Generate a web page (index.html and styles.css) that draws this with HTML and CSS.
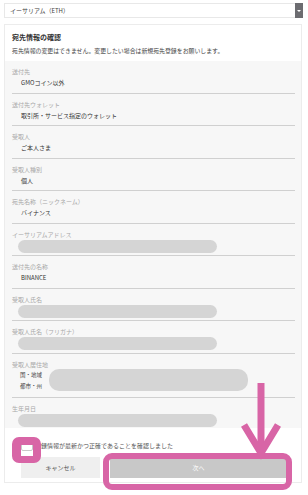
FILE: index.html
```html
<!DOCTYPE html>
<html lang="ja">
<head>
<meta charset="utf-8">
<link rel="stylesheet" href="styles.css">
</head>
<body>
<div class="select">
  <span class="select-text">イーサリアム（ETH）</span>
  <span class="select-btn"><span class="tri"></span></span>
</div>
<div class="card">
  <div class="card-head">
    <div class="title">宛先情報の確認</div>
    <div class="sub">宛先情報の変更はできません。変更したい場合は新規宛先登録をお願いします。</div>
  </div>
  <div class="list">
    <div class="row"><div class="label">送付先</div><div class="value">GMOコイン以外</div></div>
    <div class="row"><div class="label">送付先ウォレット</div><div class="value">取引所・サービス指定のウォレット</div></div>
    <div class="row"><div class="label">受取人</div><div class="value">ご本人さま</div></div>
    <div class="row"><div class="label">受取人種別</div><div class="value">個人</div></div>
    <div class="row"><div class="label">宛先名称（ニックネーム）</div><div class="value">バイナンス</div></div>
    <div class="row"><div class="label">イーサリアムアドレス</div><div class="pill-wrap"><div class="pill"></div></div></div>
    <div class="row"><div class="label">送付先の名称</div><div class="value">BINANCE</div></div>
    <div class="row"><div class="label">受取人氏名</div><div class="pill-wrap"><div class="pill"></div></div></div>
    <div class="row"><div class="label">受取人氏名（フリガナ）</div><div class="pill-wrap"><div class="pill"></div></div></div>
    <div class="row row-addr">
      <div class="label">受取人居住地</div>
      <div class="addr">
        <div class="addr-labels"><div>国・地域</div><div>都市・州</div></div>
        <div class="pill pill-big"></div>
      </div>
    </div>
    <div class="row row-last"><div class="label">生年月日</div><div class="pill-wrap"><div class="pill"></div></div></div>
  </div>
  <div class="foot">
    <div class="check-row">
      <span class="checkbox"></span>
      <span class="check-text">登録情報が最新かつ正確であることを確認しました</span>
    </div>
    <div class="btn-row">
      <div class="btn btn-cancel">キャンセル</div>
      <div class="btn btn-next">次へ</div>
    </div>
  </div>
</div>
<div class="mark mark-check"></div>
<div class="mark mark-next"></div>
<svg class="arrow" width="50" height="80" viewBox="0 0 50 80">
  <path d="M21 0 V70" stroke="#d865a6" stroke-width="7" fill="none"/>
  <path d="M4 42 L21 70 L38 42" stroke="#d865a6" stroke-width="7" fill="none" stroke-linejoin="miter"/>
</svg>
</body>
</html>
```

FILE: styles.css
```css
html, body {
  margin: 0;
  padding: 0;
  background: #ffffff;
  font-family: "Noto Sans CJK JP", "Noto Sans", sans-serif;
  color: #333;
}
body {
  position: relative;
  width: 308px;
  height: 495px;
  overflow: hidden;
}
.select {
  margin: 3px 5px 0 4px;
  height: 15px;
  border: 1px solid #e8e8e8;
  border-right: none;
  box-sizing: border-box;
  display: flex;
  align-items: center;
  justify-content: space-between;
  background: #fff;
}
.select-text {
  padding-left: 5px;
  font-size: 6px;
  line-height: 10px;
  color: #444;
}
.select-btn {
  width: 8px;
  height: 15px;
  margin-top: -1px;
  margin-bottom: -1px;
  background: #6c6c70;
  display: flex;
  align-items: center;
  justify-content: center;
}
.tri {
  width: 0;
  height: 0;
  border-left: 2px solid transparent;
  border-right: 2px solid transparent;
  border-top: 2px solid #fff;
}
.card {
  margin: 6px 6px 0 4px;
  border: 1px solid #ececec;
  background: #fff;
}
.card-head {
  padding: 7px 7px 5px 7px;
}
.title {
  font-size: 7px;
  line-height: 10px;
  font-weight: bold;
  color: #333;
}
.sub {
  margin-top: 4px;
  font-size: 5.9px;
  line-height: 10px;
  color: #444;
  white-space: nowrap;
}
.list {
  background: #f7f7f7;
  padding: 0 6px 0 7px;
}
.row {
  padding: 6px 0 4.5px 0;
  border-bottom: 1px solid #d0d0d0;
}
.row-addr {
  padding-bottom: 5px;
}
.row-last {
  border-bottom: none;
  padding-bottom: 3px;
}
.label {
  font-size: 6px;
  line-height: 10px;
  color: #a8a8a8;
  white-space: nowrap;
}
.value {
  padding-left: 9px;
  font-size: 6px;
  line-height: 11px;
  color: #333;
}
.pill-wrap {
  height: 13px;
  margin-bottom: -2px;
}
.pill {
  margin-left: 6px;
  width: 199px;
  height: 13px;
  border-radius: 7px;
  background: #d5d5d5;
}
.addr {
  display: flex;
  align-items: flex-start;
  height: 22px;
}
.addr-labels {
  width: 37px;
  flex: none;
  padding-left: 8px;
  box-sizing: border-box;
  font-size: 5.5px;
  line-height: 11px;
  color: #444;
  white-space: nowrap;
}
.pill-big {
  margin-left: 0;
  margin-top: -1px;
  width: 199px;
  height: 22px;
  border-radius: 10px;
}
.foot {
  padding: 12px 0 4px 16px;
  background: #fff;
}
.check-row {
  display: flex;
  align-items: center;
  height: 12px;
}
.checkbox {
  width: 12px;
  height: 11px;
  box-sizing: border-box;
  border: 1px solid #c8c8c8;
  border-radius: 2px;
  background: #fff;
}
.check-text {
  margin-left: 2px;
  font-size: 6px;
  line-height: 10px;
  color: #555;
  white-space: nowrap;
}
.btn-row {
  margin-top: 5px;
  display: flex;
  gap: 10px;
}
.btn {
  height: 21px;
  display: flex;
  align-items: center;
  justify-content: center;
  font-size: 6px;
}
.btn-cancel {
  width: 79px;
  background: #efefef;
  color: #555;
}
.btn-next {
  width: 177px;
  background: #c8c8c8;
  color: #fff;
}
.mark {
  position: absolute;
  box-sizing: border-box;
  border-color: #d865a6;
  border-style: solid;
}
.mark-check {
  left: 12px;
  top: 437px;
  width: 29px;
  height: 26px;
  border-width: 8px 8px 7px 9px;
  border-radius: 7px;
}
.mark-next {
  left: 103px;
  top: 453px;
  width: 189px;
  height: 37px;
  border-width: 6px;
  border-radius: 9px;
}
.arrow {
  position: absolute;
  left: 240px;
  top: 383px;
}
```
